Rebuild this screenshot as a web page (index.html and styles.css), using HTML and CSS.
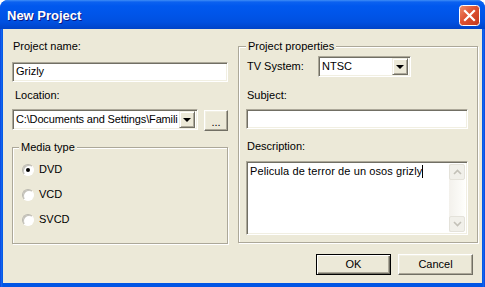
FILE: index.html
```html
<!DOCTYPE html>
<html lang="en">
<head>
<meta charset="UTF-8">
<title>New Project</title>
<link rel="stylesheet" href="styles.css">
</head>
<body>
<div class="window">
  <div class="titlebar">
    <span class="title">New Project</span>
    <div class="close">
      <svg width="21" height="21" viewBox="0 0 21 21">
        <defs>
          <linearGradient id="red" x1="0" y1="0" x2="1" y2="1">
            <stop offset="0" stop-color="#F0906E"/>
            <stop offset="0.45" stop-color="#DE5233"/>
            <stop offset="1" stop-color="#C2361A"/>
          </linearGradient>
        </defs>
        <rect x="0.5" y="0.5" width="20" height="20" rx="3" fill="url(#red)" stroke="#fff"/>
        <path d="M6 6 L15 15 M15 6 L6 15" stroke="#fff" stroke-width="2.2" stroke-linecap="square"/>
      </svg>
    </div>
  </div>

  <div class="client">
    <div class="columns">
      <div class="left">
        <div class="label">Project name:</div>
        <div class="edit name">Grizly</div>
        <div class="label loc">Location:</div>
        <div class="row">
          <div class="combo location">
            <span class="combo-text path">C:\Documents and Settings\Famili</span>
            <span class="drop"><i></i></span>
          </div>
          <div class="btn browse">...</div>
        </div>
        <fieldset class="group media">
          <legend>Media type</legend>
          <div class="radio"><span class="dot checked"></span>DVD</div>
          <div class="radio"><span class="dot"></span>VCD</div>
          <div class="radio"><span class="dot"></span>SVCD</div>
        </fieldset>
      </div>

      <fieldset class="group props">
        <legend>Project properties</legend>
        <div class="tv-row">
          <span class="tv-label">TV System:</span>
          <div class="combo tv">
            <span class="combo-text">NTSC</span>
            <span class="drop"><i></i></span>
          </div>
        </div>
        <div class="label subj">Subject:</div>
        <div class="edit subject"></div>
        <div class="label desc">Description:</div>
        <div class="edit memo">
          <div class="memo-text">Pelicula de terror de un osos grizly<span class="caret"></span></div>
          <div class="scrollbar">
            <div class="arrow"><svg width="9" height="6" viewBox="0 0 9 6"><path d="M1 5 L4.5 1.5 L8 5" fill="none" stroke="#C3C1B8" stroke-width="1.6"/></svg></div>
            <div class="arrow"><svg width="9" height="6" viewBox="0 0 9 6"><path d="M1 1 L4.5 4.5 L8 1" fill="none" stroke="#C3C1B8" stroke-width="1.6"/></svg></div>
          </div>
        </div>
      </fieldset>
    </div>

    <div class="buttons">
      <div class="btn default">OK</div>
      <div class="btn">Cancel</div>
    </div>
  </div>
</div>
</body>
</html>
```

FILE: styles.css
```css
* {
  box-sizing: border-box;
}
body {
  margin: 0;
  font-family: "Liberation Sans", Arial, sans-serif;
  font-size: 11px;
  line-height: 13px;
  color: #000;
  background: #fff;
}

/* window frame */
.window {
  width: 485px;
  height: 287px;
  display: flex;
  flex-direction: column;
  background: linear-gradient(90deg, #0831D9 0, #166AEE 1px, #0055E5 3px, #0055E5 482px, #166AEE 484px, #0831D9 485px);
  border-radius: 8px 8px 0 0;
  overflow: hidden;
}
.titlebar {
  height: 29px;
  flex: none;
  display: flex;
  align-items: center;
  justify-content: space-between;
  padding: 0 5px 0 7px;
  background: linear-gradient(#3E8DF6 0, #0B61F0 2px, #0058EE 6px, #0055E9 14px, #0050E0 22px, #0043C8 29px);
}
.title {
  color: #fff;
  font-weight: bold;
  font-size: 13px;
  text-shadow: 1px 1px #0A1883;
  padding-top: 1px;
}
.close {
  width: 21px;
  height: 21px;
  margin-top: 1px;
}
.close svg {
  display: block;
}

.client {
  flex: 1;
  margin: 0 3px 4px;
  background: #ECE9D8;
  padding: 11px 4px 0 9px;
  display: flex;
  flex-direction: column;
}
.columns {
  display: flex;
  gap: 10px;
}
.left {
  width: 216px;
  display: flex;
  flex-direction: column;
}
.label {
  height: 13px;
  padding-left: 1px;
  white-space: nowrap;
}
.loc {
  margin-top: 7px;
  padding-left: 3px;
}

/* sunken fields */
.edit,
.combo {
  background: #fff;
  border: 1px solid;
  border-color: #ACA899 #fff #fff #ACA899;
  box-shadow: inset 1px 1px #716F64, inset -1px -1px #F1EFE2;
}
.edit {
  height: 20px;
  padding: 2px 3px;
  white-space: nowrap;
}
.name {
  margin-top: 9px;
}
.row {
  display: flex;
  margin-top: 7px;
}
.combo {
  height: 21px;
  display: flex;
  align-items: center;
  padding: 2px;
  overflow: hidden;
}
.combo-text {
  flex: 1;
  white-space: nowrap;
  padding-left: 1px;
}
.path {
  letter-spacing: -0.15px;
}
.location {
  width: 186px;
}
.drop {
  width: 16px;
  height: 17px;
  flex: none;
  background: #ECE9D8;
  border: 1px solid;
  border-color: #F1EFE2 #716F64 #716F64 #F1EFE2;
  box-shadow: inset 1px 1px #fff, inset -1px -1px #ACA899;
  display: flex;
  align-items: center;
  justify-content: center;
}
.drop i {
  width: 0;
  height: 0;
  border-left: 4px solid transparent;
  border-right: 4px solid transparent;
  border-top: 4px solid #000;
  margin-top: 1px;
}

/* raised buttons */
.btn {
  width: 75px;
  height: 21px;
  background: #ECE9D8;
  border: 1px solid;
  border-color: #fff #716F64 #716F64 #fff;
  box-shadow: inset -1px -1px #ACA899, inset 1px 1px #F1EFE2;
  display: flex;
  align-items: center;
  justify-content: center;
}
.btn.default {
  border-color: #000;
  box-shadow: inset 1px 1px #fff, inset -1px -1px #716F64, inset -2px -2px #ACA899;
}
.browse {
  width: 24px;
  margin: 1px 0 0 6px;
  padding-top: 3px;
}

/* group boxes */
.group {
  margin: 0;
  border: 1px solid #ACA899;
  box-shadow: inset 1px 1px #fff, 1px 1px #fff;
  padding: 0 0 0 6px;
  min-width: 0;
}
.group legend {
  padding: 0 2px;
  line-height: 13px;
  background: #ECE9D8;
}
.media {
  margin-top: 10px;
  height: 103px;
  padding-top: 9px;
}
.radio {
  display: flex;
  align-items: center;
  height: 13px;
  margin: 0 0 12px 3px;
}
.dot {
  width: 12px;
  height: 12px;
  border-radius: 50%;
  background: #fff;
  border: 1px solid;
  border-color: #B9B7AE #fff #fff #B9B7AE;
  box-shadow: inset 1px 1px #C4C2BA;
  margin-right: 5px;
  display: flex;
  align-items: center;
  justify-content: center;
}
.dot.checked::after {
  content: "";
  width: 4px;
  height: 4px;
  border-radius: 50%;
  background: #000;
}

.props {
  width: 240px;
  height: 203px;
  padding-top: 3px;
}
.props legend {
  margin-left: 1px;
}
.tv-row {
  display: flex;
  align-items: center;
  padding-left: 1px;
}
.tv-label {
  width: 72px;
  padding-left: 1px;
}
.tv {
  width: 93px;
}
.subj {
  margin-top: 12px;
  padding-left: 2px;
}
.subject,
.memo {
  width: 222px;
  margin-left: 1px;
  margin-top: 7px;
}
.desc {
  margin-top: 11px;
  padding-left: 2px;
}
.memo {
  margin-top: 8px;
  height: 74px;
  display: flex;
  padding: 2px 2px 2px 3px;
}
.memo-text {
  flex: 1;
  padding-top: 1px;
  letter-spacing: 0.1px;
}
.caret {
  display: inline-block;
  width: 1px;
  height: 13px;
  background: #000;
  vertical-align: top;
}
.scrollbar {
  width: 16px;
  display: flex;
  flex-direction: column;
  justify-content: space-between;
  background: linear-gradient(90deg, #F3F1EC, #FEFEFB);
}
.arrow {
  height: 16px;
  border: 1px solid #E4E2DA;
  border-radius: 2px;
  background: #F1F0EA;
  display: flex;
  align-items: center;
  justify-content: center;
}

.buttons {
  display: flex;
  justify-content: flex-end;
  gap: 7px;
  margin-top: 10px;
  padding-right: 5px;
}
```
